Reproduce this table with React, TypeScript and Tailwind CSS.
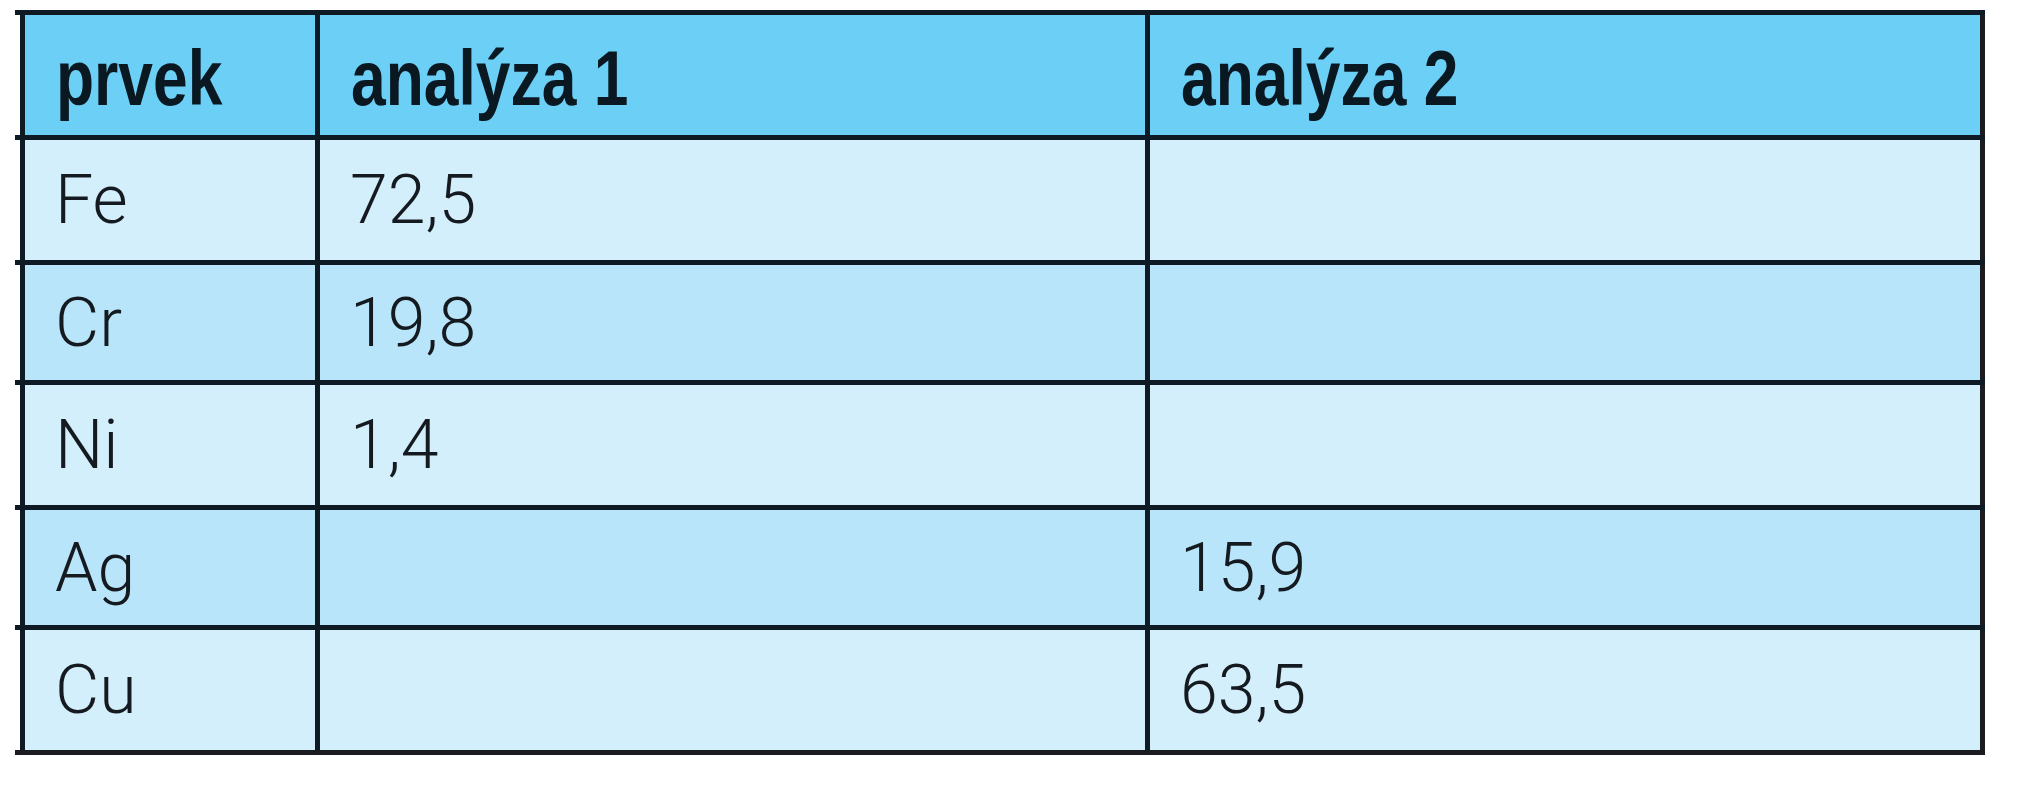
import React from "react";

const rows: { el: string; a1: string; a2: string; h: string; bg: string }[] = [
  { el: "Fe", a1: "72,5", a2: "", h: "h-[120px]", bg: "bg-[#d4effc]" },
  { el: "Cr", a1: "19,8", a2: "", h: "h-[115px]", bg: "bg-[#b9e5fa]" },
  { el: "Ni", a1: "1,4", a2: "", h: "h-[120px]", bg: "bg-[#d4effc]" },
  { el: "Ag", a1: "", a2: "15,9", h: "h-[115px]", bg: "bg-[#b9e5fa]" },
  { el: "Cu", a1: "", a2: "63,5", h: "h-[120px]", bg: "bg-[#d4effc]" },
];

function HLine() {
  return <div className="h-[5px] w-[1970px] bg-[#0f1b24]" />;
}

function Cell({ w, bg, header, children }: { w: string; bg: string; header?: boolean; children: React.ReactNode }) {
  if (header) {
    return (
      <div className={`${w} ${bg} flex items-center pl-[31px] pt-[6px] leading-none font-['Liberation_Sans',Arial,sans-serif] font-bold text-[77px] text-[#0a1822]`}>
        <span className="inline-block origin-left scale-x-[0.81] whitespace-nowrap">{children}</span>
      </div>
    );
  }
  return (
    <div className={`${w} ${bg} flex items-center pl-[30px] leading-none font-['Roboto','Liberation_Sans',sans-serif] font-light text-[68px] text-[#141a1f]`}>
      {children}
    </div>
  );
}

function Row({ h, bg, cells, header }: { h: string; bg: string; cells: string[]; header?: boolean }) {
  return (
    <div className={`flex ${h}`}>
      <div className="w-[5px] bg-white" />
      <div className="w-[5px] bg-[#0f1b24]" />
      <Cell w="w-[290px]" bg={bg} header={header}>{cells[0]}</Cell>
      <div className="w-[5px] bg-[#0f1b24]" />
      <Cell w="w-[825px]" bg={bg} header={header}>{cells[1]}</Cell>
      <div className="w-[5px] bg-[#0f1b24]" />
      <Cell w="w-[830px]" bg={bg} header={header}>{cells[2]}</Cell>
      <div className="w-[5px] bg-[#1b1c20]" />
    </div>
  );
}

export default function App() {
  return (
    <div className="w-[2025px] h-[800px] bg-white pt-[10px] pl-[15px]">
      <div className="flex flex-col w-[1970px]">
        <HLine />
        <Row header h="h-[120px]" bg="bg-[#6ccff6]" cells={["prvek", "analýza 1", "analýza 2"]} />
        {rows.map((r) => (
          <React.Fragment key={r.el}>
            <HLine />
            <Row h={r.h} bg={r.bg} cells={[r.el, r.a1, r.a2]} />
          </React.Fragment>
        ))}
        <div className="h-[5px] w-[1970px] bg-[#1b1c20]" />
      </div>
    </div>
  );
}
